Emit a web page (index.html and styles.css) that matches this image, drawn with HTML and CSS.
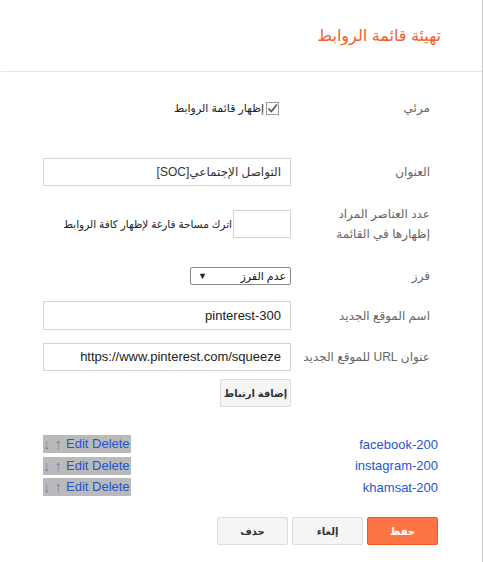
FILE: index.html
```html
<!DOCTYPE html>
<html lang="ar" dir="rtl">
<head>
<meta charset="utf-8">
<title>تهيئة قائمة الروابط</title>
<link rel="stylesheet" href="styles.css">
</head>
<body>
<div class="dialog">
  <header class="head">
    <h1 class="title">تهيئة قائمة الروابط</h1>
  </header>

  <div class="form">
    <div class="row r-visible">
      <div class="label">مرئي</div>
      <div class="ctrl">
        <label class="check">
          <span class="box"><svg width="11" height="11" viewBox="0 0 11 11"><path d="M1.5 5.5 L4.3 8.5 L10 1.5" fill="none" stroke="#555" stroke-width="1.6"/></svg></span>
          <span class="check-text">إظهار قائمة الروابط</span>
        </label>
      </div>
    </div>

    <div class="row r-title">
      <div class="label">العنوان</div>
      <div class="ctrl"><div class="input ar">التواصل الإجتماعي[SOC]</div></div>
    </div>

    <div class="row r-count">
      <div class="label">عدد العناصر المراد إظهارها في القائمة</div>
      <div class="ctrl count-ctrl">
        <div class="input small"></div>
        <span class="hint">اترك مساحة فارغة لإظهار كافة الروابط</span>
      </div>
    </div>

    <div class="row r-sort">
      <div class="label">فرز</div>
      <div class="ctrl">
        <div class="select"><span>عدم الفرز</span><span class="arrow">▼</span></div>
      </div>
    </div>

    <div class="row r-name">
      <div class="label">اسم الموقع الجديد</div>
      <div class="ctrl"><div class="input">pinterest-300</div></div>
    </div>

    <div class="row r-url">
      <div class="label">عنوان URL للموقع الجديد</div>
      <div class="ctrl"><div class="input">https://www.pinterest.com/squeeze</div></div>
    </div>

    <div class="row r-add">
      <div class="label"></div>
      <div class="ctrl"><button class="btn">إضافة ارتباط</button></div>
    </div>
  </div>

  <ul class="links">
    <li class="link-row"><span class="name">facebook-200</span><span class="acts" dir="ltr"><span class="arr">↓</span><span class="arr">↑</span><span class="ed">Edit Delete</span></span></li>
    <li class="link-row"><span class="name">instagram-200</span><span class="acts" dir="ltr"><span class="arr">↓</span><span class="arr">↑</span><span class="ed">Edit Delete</span></span></li>
    <li class="link-row"><span class="name">khamsat-200</span><span class="acts" dir="ltr"><span class="arr">↓</span><span class="arr">↑</span><span class="ed">Edit Delete</span></span></li>
  </ul>

  <div class="actions">
    <button class="btn primary">حفظ</button>
    <button class="btn">إلغاء</button>
    <button class="btn">حذف</button>
  </div>
</div>
</body>
</html>
```

FILE: styles.css
```css
html, body {
  margin: 0;
  padding: 0;
  background: #fff;
}
body {
  font-family: "Liberation Sans", "DejaVu Sans", "Noto Sans", sans-serif;
  color: #222;
}
.dialog {
  width: 481px;
  min-height: 562px;
  border-right: 1px solid #c8c8c8;
  direction: rtl;
}
.head {
  height: 71px;
  border-bottom: 1px solid #e5e5e5;
  padding-right: 41px;
  display: flex;
  align-items: center;
}
.title {
  margin: 0;
  font-size: 16px;
  font-weight: normal;
  color: #f4602a;
}
.form {
  padding: 0 52px 0 42px;
}
.row {
  display: grid;
  grid-template-columns: 131px 248px;
  column-gap: 8px;
  align-items: center;
}
.label {
  font-size: 12px;
  color: #666;
  line-height: 20px;
}
.ctrl {
  display: flex;
  align-items: center;
}
.r-visible { margin-top: 26px; height: 20px; }
.r-title { margin-top: 40px; height: 28px; }
.r-count { margin-top: 18px; align-items: start; height: 40px; }
.r-sort { margin-top: 22px; height: 18px; }
.r-name { margin-top: 17px; height: 29px; }
.r-url { margin-top: 13px; height: 28px; }
.r-add { margin-top: 8px; height: 28px; }

.check {
  display: flex;
  align-items: center;
  gap: 2px;
  margin-right: 12px;
  font-size: 11px;
  color: #222;
}
.box {
  width: 11px;
  height: 11px;
  border: 1px solid #999;
  display: flex;
  align-items: center;
  justify-content: center;
  background: #fff;
}
.input {
  box-sizing: border-box;
  width: 248px;
  height: 28px;
  border: 1px solid #d4d4d4;
  padding: 0 9px;
  font-size: 13px;
  line-height: 26px;
  color: #222;
  white-space: nowrap;
  overflow: hidden;
}
.input.ar {
  font-size: 12px;
  color: #333;
}
.r-name .input { height: 29px; line-height: 27px; }
.input.small {
  width: 58px;
  flex: none;
}
.count-ctrl {
  margin-top: 6px;
  gap: 1px;
}
.hint {
  font-size: 10.5px;
  color: #222;
  white-space: nowrap;
}
.select {
  box-sizing: border-box;
  width: 101px;
  height: 18px;
  border: 1px solid #888;
  border-radius: 2px;
  display: flex;
  justify-content: space-between;
  align-items: center;
  padding: 0 4px 0 7px;
  font-size: 11px;
  color: #111;
}
.arrow {
  font-size: 9px;
  color: #222;
}
.btn {
  box-sizing: border-box;
  width: 71px;
  height: 28px;
  border: 1px solid #dcdcdc;
  border-radius: 2px;
  background: #f5f5f5;
  font-family: "Liberation Sans", "DejaVu Sans", sans-serif;
  font-size: 10px;
  font-weight: bold;
  color: #333;
  padding: 0;
  cursor: pointer;
}
.links {
  list-style: none;
  margin: 28px 0 0;
  padding: 0 44px 0 42px;
  display: flex;
  flex-direction: column;
  gap: 3.5px;
}
.link-row {
  display: flex;
  justify-content: space-between;
  align-items: center;
  height: 18px;
  font-size: 13px;
  color: #1f55d2;
}
.acts {
  display: inline-flex;
  align-items: center;
  gap: 4px;
  background: #bababa;
  height: 18px;
  line-height: 18px;
  padding: 0 1px 0 0;
  color: #1f55d2;
}
.arr {
  font-family: "Liberation Sans", sans-serif;
  font-size: 15px;
  color: #7482b4;
}
.actions {
  margin-top: 21px;
  padding-right: 44px;
  display: flex;
  gap: 4px;
}
.btn.primary {
  background: #fe7545;
  border-color: #f2561d;
  color: #fff;
}
```
